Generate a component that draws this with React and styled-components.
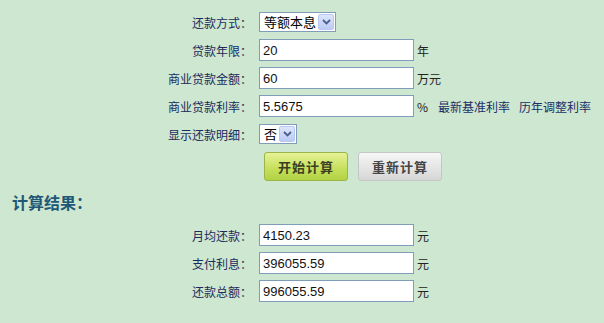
import React from 'react';
import styled, { createGlobalStyle } from 'styled-components';

const GlobalStyle = createGlobalStyle`
  body {
    margin: 0;
    background: #cde7d0;
    font-family: "Noto Sans CJK SC", "Liberation Sans", sans-serif;
  }
`;

const Page = styled.div`
  width: 604px;
  height: 323px;
  box-sizing: border-box;
  padding-top: 8px;
  background: #cde7d0;
  overflow: hidden;
`;

const Row = styled.div`
  display: flex;
  align-items: center;
  height: 28px;
`;

const Label = styled.span`
  width: 259px;
  box-sizing: border-box;
  padding-right: 7px;
  text-align: right;
  font-size: 12px;
  color: #1b2b5d;
  white-space: nowrap;
`;

const TextInput = styled.input`
  width: 155px;
  height: 22px;
  box-sizing: border-box;
  margin: 0;
  padding: 0 3px;
  border: 1px solid #7f9db9;
  background: #fff;
  color: #111;
  font: 13px "Liberation Sans", Arial, sans-serif;
  outline: none;
`;

const Select = styled.div`
  display: flex;
  align-items: center;
  justify-content: space-between;
  width: ${p => p.$width}px;
  height: 20px;
  box-sizing: border-box;
  padding: 1px;
  border: 1px solid #7f9db9;
  background: #fff;
  font-size: 13px;
  color: #000;
`;

const SelectText = styled.span`
  padding-left: 3px;
  line-height: 16px;
  white-space: nowrap;
`;

const DropButton = styled.span`
  display: flex;
  align-items: center;
  justify-content: center;
  width: 16px;
  height: 16px;
  box-sizing: border-box;
  border: 1px solid #b9caf2;
  border-radius: 2px;
  background: linear-gradient(#dbe5fc, #bccbf5);
`;

const Unit = styled.span`
  margin-left: 3px;
  font-size: 12px;
  color: #222;
  white-space: nowrap;
`;

const Link = styled.a`
  margin-left: ${p => p.$gap}px;
  font-size: 12px;
  color: #1b2f66;
  text-decoration: none;
  white-space: nowrap;
`;

const Buttons = styled.div`
  display: flex;
  gap: 10px;
  margin-top: 4px;
  padding-left: 264px;
`;

const Button = styled.button`
  width: 84px;
  height: 29px;
  margin: 0;
  padding: 0;
  border-radius: 3px;
  font: bold 13px "Noto Sans CJK SC", sans-serif;
  letter-spacing: 1px;
  cursor: pointer;
  border: 1px solid ${p => (p.$primary ? '#9cb54a' : '#c5c7c5')};
  color: ${p => (p.$primary ? '#3b3f22' : '#444')};
  background: ${p =>
    p.$primary
      ? 'linear-gradient(#e6f296, #c4df5a 60%, #b3d243)'
      : 'linear-gradient(#f6f6f6, #e3e3e3 60%, #d6d6d6)'};
`;

const Title = styled.h3`
  margin: 11px 0 9px;
  padding-left: 12px;
  font-size: 16px;
  line-height: 20px;
  font-weight: bold;
  color: #1f5877;
`;

function Chevron() {
  return (
    <svg width="9" height="6" viewBox="0 0 9 6">
      <path d="M1 1 L4.5 4.5 L8 1" fill="none" stroke="#4b5f8c" strokeWidth="1.8" />
    </svg>
  );
}

function Dropdown({ value, width }) {
  return (
    <Select $width={width}>
      <SelectText>{value}</SelectText>
      <DropButton>
        <Chevron />
      </DropButton>
    </Select>
  );
}

const results = [
  { label: '月均还款：', value: '4150.23' },
  { label: '支付利息：', value: '396055.59' },
  { label: '还款总额：', value: '996055.59' },
];

export default function App() {
  return (
    <Page>
      <GlobalStyle />
      <Row>
        <Label>还款方式：</Label>
        <Dropdown value="等额本息" width={77} />
      </Row>
      <Row>
        <Label>贷款年限：</Label>
        <TextInput value="20" readOnly />
        <Unit>年</Unit>
      </Row>
      <Row>
        <Label>商业贷款金额：</Label>
        <TextInput value="60" readOnly />
        <Unit>万元</Unit>
      </Row>
      <Row>
        <Label>商业贷款利率：</Label>
        <TextInput value="5.5675" readOnly />
        <Unit>%</Unit>
        <Link href="#" $gap={10}>最新基准利率</Link>
        <Link href="#" $gap={9}>历年调整利率</Link>
      </Row>
      <Row>
        <Label>显示还款明细：</Label>
        <Dropdown value="否" width={38} />
      </Row>
      <Buttons>
        <Button $primary>开始计算</Button>
        <Button>重新计算</Button>
      </Buttons>
      <Title>计算结果：</Title>
      {results.map(r => (
        <Row key={r.label}>
          <Label>{r.label}</Label>
          <TextInput value={r.value} readOnly />
          <Unit>元</Unit>
        </Row>
      ))}
    </Page>
  );
}
